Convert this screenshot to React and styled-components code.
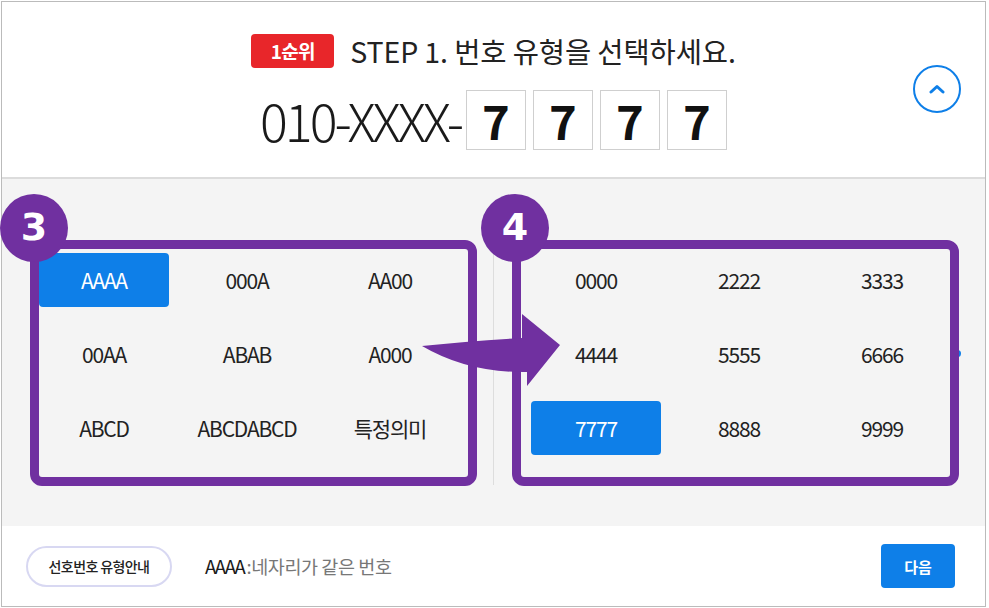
import styled, { createGlobalStyle } from "styled-components";

const GlobalStyle = createGlobalStyle`
    html, body {
        margin: 0;
        padding: 0;
        background: #ffffff;
    }
    body {
        padding: 1px 0 0 1px;
        font-family: "Noto Sans CJK KR", "Noto Sans", sans-serif;
        color: #222222;
    }
    * { box-sizing: border-box; }
`;

const FONT = `"Noto Sans CJK KR", "Noto Sans", sans-serif`;
const PURPLE = "#7030a0";
const BLUE = "#0e7fe8";

const Frame = styled.div`
    width: 985px;
    height: 606px;
    border: 1px solid #bbbbbb;
    display: flex;
    flex-direction: column;
    background: #ffffff;
`;

const Header = styled.header`
    display: grid;
    grid-template-columns: 1fr auto 1fr;
    align-items: center;
    height: 177px;
    border-bottom: 2px solid #dcdcdc;
`;

const HeaderCenter = styled.div`
    grid-column: 2;
    display: flex;
    flex-direction: column;
    align-items: center;
    gap: 22px;
    padding-top: 4px;
`;

const TitleRow = styled.div`
    display: flex;
    align-items: center;
    gap: 16px;
`;

const RankBadge = styled.span`
    display: flex;
    align-items: center;
    justify-content: center;
    width: 83px;
    height: 34px;
    border-radius: 4px;
    background: #e8262a;
    color: #ffffff;
    font-family: ${FONT};
    font-size: 19px;
    font-weight: 700;
    letter-spacing: -0.8px;
`;

const Title = styled.h1`
    margin: 0;
    font-family: ${FONT};
    font-size: 28.5px;
    font-weight: 400;
    letter-spacing: -0.1px;
    color: #222222;
    line-height: 34px;
`;

const NumberRow = styled.div`
    display: flex;
    align-items: center;
    gap: 7px;
`;

const Prefix = styled.span`
    font-family: ${FONT};
    font-size: 52px;
    font-weight: 300;
    letter-spacing: -3px;
    color: #1a1a1a;
    line-height: 60px;
    margin-right: -2px;
`;

const DigitBox = styled.span`
    display: flex;
    align-items: center;
    justify-content: center;
    width: 60px;
    height: 60px;
    border: 1px solid #cfcfcf;
    background: #ffffff;
    font-family: ${FONT};
    font-size: 47px;
    font-weight: 700;
    color: #111111;
`;

const CollapseButton = styled.button`
    grid-column: 3;
    justify-self: end;
    margin-right: 24px;
    margin-top: -2px;
    width: 48px;
    height: 48px;
    border-radius: 50%;
    border: 2px solid ${BLUE};
    background: #ffffff;
    display: flex;
    align-items: center;
    justify-content: center;
    padding: 0;
    cursor: pointer;
`;

const Body = styled.section`
    position: relative;
    flex: 1;
    background: #f4f4f4;
    padding: 66px 0 41px;
    display: grid;
    grid-template-columns: 491px 1fr;
`;

const Panel = styled.div`
    position: relative;
    padding: 8px 38px 0 37px;
    border-left: ${(p) => (p.$divided ? "1px solid #dddddd" : "none")};
`;

const OptionGrid = styled.div`
    display: grid;
    grid-template-columns: repeat(3, 130px);
    grid-auto-rows: 54px;
    column-gap: 13px;
    row-gap: 20px;
`;

const Option = styled.button`
    border: none;
    border-radius: 4px;
    background: ${(p) => (p.$active ? BLUE : "transparent")};
    color: ${(p) => (p.$active ? "#ffffff" : "#222222")};
    font-family: ${FONT};
    font-size: 21px;
    font-weight: 400;
    letter-spacing: -1.2px;
    padding: 0;
    cursor: pointer;
`;

const PageDot = styled.span`
    position: absolute;
    right: 24px;
    top: 105px;
    width: 7px;
    height: 7px;
    border-radius: 50%;
    background: ${BLUE};
`;

const CalloutBox = styled.div`
    position: absolute;
    top: 61px;
    left: ${(p) => p.$left}px;
    width: 447px;
    height: 246px;
    border: 9px solid ${PURPLE};
    border-radius: 12px;
    pointer-events: none;
`;

const StepCircle = styled.div`
    position: absolute;
    top: 15px;
    left: ${(p) => p.$left}px;
    width: 68px;
    height: 68px;
    border-radius: 50%;
    background: ${PURPLE};
    color: #ffffff;
    display: flex;
    align-items: center;
    justify-content: center;
    font-family: "DejaVu Sans", "Noto Sans", sans-serif;
    font-size: 38px;
    font-weight: 700;
    line-height: 1;
    padding-bottom: 2px;
`;

const ArrowSvg = styled.svg`
    position: absolute;
    left: 416px;
    top: 131px;
    pointer-events: none;
`;

const Footer = styled.footer`
    height: 80px;
    display: flex;
    align-items: center;
    padding: 0 30px 0 24px;
`;

const GuideButton = styled.button`
    width: 146px;
    height: 41px;
    border-radius: 21px;
    border: 2px solid #d8d8f2;
    background: #ffffff;
    font-family: ${FONT};
    font-size: 14px;
    font-weight: 500;
    letter-spacing: -0.6px;
    color: #222222;
    padding: 0;
    cursor: pointer;
`;

const Hint = styled.p`
    margin: 0 0 0 33px;
    flex: 1;
    font-family: ${FONT};
    font-size: 18.5px;
    letter-spacing: -0.4px;
    color: #777777;
`;

const HintKey = styled.span`
    color: #1a1a1a;
    font-weight: 400;
    letter-spacing: -1.3px;
    margin-right: 2px;
`;

const NextButton = styled.button`
    width: 74px;
    height: 44px;
    border: none;
    border-radius: 4px;
    background: ${BLUE};
    color: #ffffff;
    font-family: ${FONT};
    font-size: 15px;
    font-weight: 700;
    cursor: pointer;
    padding: 0;
`;

const patterns = ["AAAA", "000A", "AA00", "00AA", "ABAB", "A000", "ABCD", "ABCDABCD", "특정의미"];
const numbers = ["0000", "2222", "3333", "4444", "5555", "6666", "7777", "8888", "9999"];

function App() {
    const pattern = "AAAA";
    const picked = "7777";

    return (
        <>
            <GlobalStyle />
            <Frame>
                <Header>
                    <HeaderCenter>
                        <TitleRow>
                            <RankBadge>1순위</RankBadge>
                            <Title>STEP 1. 번호 유형을 선택하세요.</Title>
                        </TitleRow>
                        <NumberRow>
                            <Prefix>010-XXXX-</Prefix>
                            {picked.split("").map((d, i) => (
                                <DigitBox key={i}>{d}</DigitBox>
                            ))}
                        </NumberRow>
                    </HeaderCenter>
                    <CollapseButton aria-label="접기">
                        <svg width="16" height="10" viewBox="0 0 16 10">
                            <path d="M2 8 L8 2.5 L14 8" fill="none" stroke={BLUE} strokeWidth="3" strokeLinecap="round" strokeLinejoin="round" />
                        </svg>
                    </CollapseButton>
                </Header>

                <Body>
                    <Panel>
                        <OptionGrid>
                            {patterns.map((p) => (
                                <Option key={p} $active={p === pattern}>{p}</Option>
                            ))}
                        </OptionGrid>
                    </Panel>
                    <Panel $divided>
                        <OptionGrid>
                            {numbers.map((n) => (
                                <Option key={n} $active={n === picked}>{n}</Option>
                            ))}
                        </OptionGrid>
                        <PageDot />
                    </Panel>

                    {/* 안내용 표시 */}
                    <CalloutBox $left={28} />
                    <CalloutBox $left={510} />
                    <StepCircle $left={-2}>3</StepCircle>
                    <StepCircle $left={479}>4</StepCircle>
                    <ArrowSvg width="145" height="80" viewBox="0 0 145 80">
                        <path d="M4 36 Q52 31 104 28 L104 4 L142 35 L109 76 L109 62 Q50 63 4 36 Z" fill={PURPLE} />
                    </ArrowSvg>
                </Body>

                <Footer>
                    <GuideButton>선호번호 유형안내</GuideButton>
                    <Hint>
                        <HintKey>AAAA</HintKey>:네자리가 같은 번호
                    </Hint>
                    <NextButton>다음</NextButton>
                </Footer>
            </Frame>
        </>
    );
}

export default App;
